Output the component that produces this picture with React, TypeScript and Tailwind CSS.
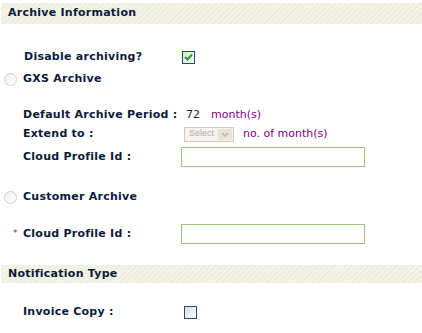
import React from "react";

const font = { fontFamily: '"DejaVu Sans", Verdana, sans-serif' };
const bold = "text-[11px] font-bold text-[#0c1a3c] tracking-[0.25px]";

function Band({ title, className }: { title: string; className?: string }) {
  return (
    <div
      className={`flex items-center pl-[7px] bg-[#f4f4e6] ${bold} ${className ?? ""}`}
      style={{
        backgroundImage:
          "repeating-linear-gradient(135deg, rgba(220,220,200,0.35) 0 1px, transparent 1px 4px)",
      }}
    >
      {title}
    </div>
  );
}

function Radio() {
  return (
    <span className="inline-block w-[13px] h-[13px] rounded-full border border-[#cfcfcf] bg-gradient-to-br from-[#f0f0f0] to-white" />
  );
}

function Check({ checked }: { checked?: boolean }) {
  return (
    <span className="inline-flex items-center justify-center w-[13px] h-[13px] border border-[#1c4f7c] bg-gradient-to-br from-[#dcdcd6] to-white">
      {checked && (
        <svg width="9" height="8" viewBox="0 0 9 8">
          <path d="M1 4 L3.5 6.5 L8 1.5" fill="none" stroke="#21a321" strokeWidth="2" />
        </svg>
      )}
    </span>
  );
}

function Row({
  label,
  children,
  className,
  star,
}: {
  label: string;
  children?: React.ReactNode;
  className?: string;
  star?: boolean;
}) {
  return (
    <div className={`flex items-center h-[18px] ${className ?? ""}`}>
      <div className={`relative w-[158px] pl-[23px] whitespace-nowrap ${bold}`}>
        {star && <span className="absolute left-[13px] top-[1px] text-[9px] text-[#6a4040] font-normal">*</span>}
        {label}
      </div>
      {children}
    </div>
  );
}

export default function App() {
  return (
    <div className="w-[422px] h-[333px] bg-white overflow-hidden" style={font}>
      <Band title="Archive Information" className="mt-[3px] h-[21px] ml-[1px]" />

      <div className="flex items-center h-[18px] mt-[24px]">
        <div className={`w-[182px] pl-[24px] ${bold}`}>Disable archiving?</div>
        <Check checked />
      </div>

      <div className="flex items-center h-[18px] mt-[4px] pl-[4px] gap-[6px]">
        <Radio />
        <span className={bold}>GXS Archive</span>
      </div>

      <Row label="Default Archive Period :" className="mt-[18px]">
        <span className="ml-[28px] text-[11px] text-[#1a1a1a]">72</span>
        <span className="ml-[11px] text-[11px] text-[#800080]">month(s)</span>
      </Row>

      <Row label="Extend to :" className="mt-[1px]">
        <span className="ml-[26px] flex items-center h-[15px] w-[50px] border border-[#cdc9bc] bg-[#f4f3ee] text-[9px] text-[#b0ada4]" style={{ fontFamily: '"Liberation Sans", Arial, sans-serif' }}>
          <span className="pl-[4px] flex-1">Select</span>
          <span className="w-[14px] h-[11px] mr-[1px] flex items-center justify-center bg-[#e6e4dc]">
            <svg width="8" height="5" viewBox="0 0 8 5">
              <path d="M1 1 L4 4 L7 1" fill="none" stroke="#b8b6ae" strokeWidth="1.5" />
            </svg>
          </span>
        </span>
        <span className="ml-[9px] text-[11px] text-[#800080]">no. of month(s)</span>
      </Row>

      <Row label="Cloud Profile Id :" className="mt-[4px] h-[20px]">
        <span className="ml-[23px] w-[184px] h-[20px] border-[1.5px] border-[#a2c07c] bg-white" />
      </Row>

      <div className="flex items-center h-[18px] mt-[21px] pl-[4px] gap-[6px]">
        <Radio />
        <span className={bold}>Customer Archive</span>
      </div>

      <Row label="Cloud Profile Id :" star className="mt-[18px] h-[20px]">
        <span className="ml-[23px] w-[184px] h-[20px] border-[1.5px] border-[#a2c07c] bg-white" />
      </Row>

      <Band title="Notification Type" className="mt-[21px] h-[18px] ml-[1px]" />

      <div className="flex items-center h-[18px] mt-[20px]">
        <div className={`w-[184px] pl-[23px] ${bold}`}>Invoice Copy :</div>
        <Check />
      </div>
    </div>
  );
}
